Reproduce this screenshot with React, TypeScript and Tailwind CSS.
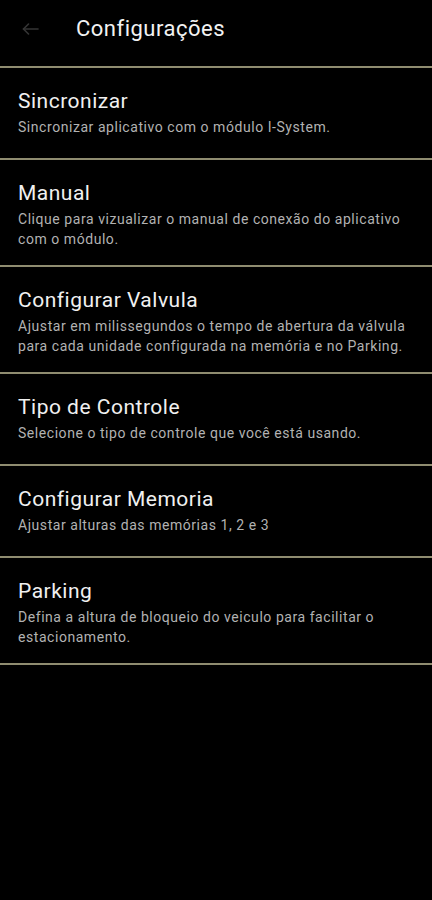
const items = [
  { title: 'Sincronizar', desc: 'Sincronizar aplicativo com o módulo I-System.' },
  { title: 'Manual', desc: 'Clique para vizualizar o manual de conexão do aplicativo com o módulo.' },
  { title: 'Configurar Valvula', desc: 'Ajustar em milissegundos o tempo de abertura da válvula para cada unidade configurada na memória e no Parking.' },
  { title: 'Tipo de Controle', desc: 'Selecione o tipo de controle que você está usando.' },
  { title: 'Configurar Memoria', desc: 'Ajustar alturas das memórias 1, 2 e 3' },
  { title: 'Parking', desc: 'Defina a altura de bloqueio do veiculo para facilitar o estacionamento.' },
]

const App = () => {
  return (
    <div className="min-h-[900px] w-full bg-black font-['Roboto',sans-serif]">
      <header className="h-[68px] pb-[8px] flex items-center border-b-2 border-b-[#8f8c70]">
        <div className="w-[76px] pl-[22px] flex items-center">
          <svg width="17" height="12" viewBox="0 0 17 12" fill="none" stroke="#353535" strokeWidth="1.6" strokeLinecap="round" strokeLinejoin="round">
            <path d="M16 6H1.5" />
            <path d="M6.5 1L1.5 6l5 5" />
          </svg>
        </div>
        <h1 className="text-[22px] leading-[22px] tracking-[0.5px] text-[#f2f2f2]">Configurações</h1>
      </header>

      <ul>
        {items.map((it) => (
          <li key={it.title} className="min-h-[92px] pl-[18px] pr-4 pt-[21px] pb-[16px] border-b-2 border-b-[#8f8c70] flex flex-col gap-[4px]">
            <span className="text-[21px] leading-6 tracking-[0.5px] text-[#f0f0f0]">{it.title}</span>
            <span className="text-[14px] leading-5 tracking-[0.55px] text-[#b2b2b2]">{it.desc}</span>
          </li>
        ))}
      </ul>
    </div>
  )
}

export default App
